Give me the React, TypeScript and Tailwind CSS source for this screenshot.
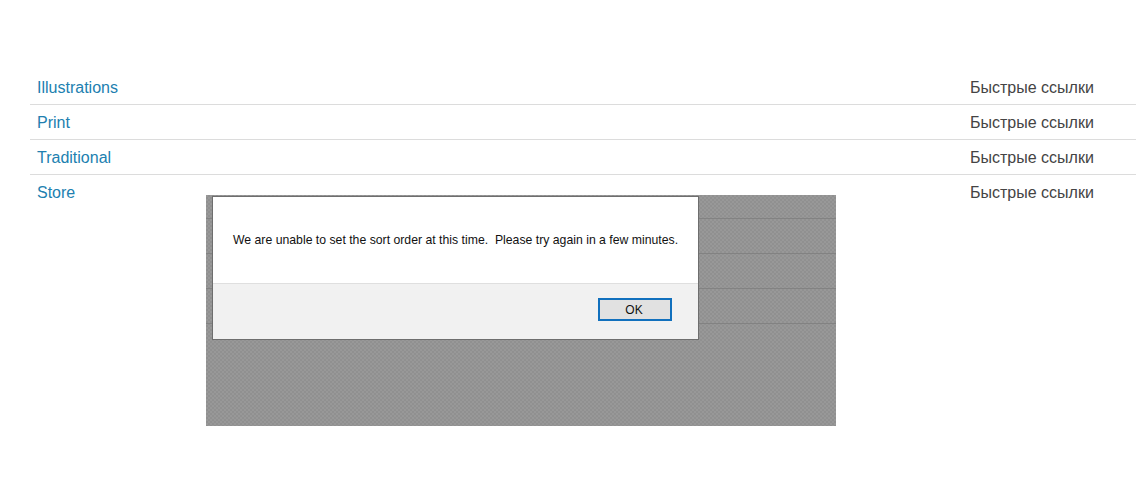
import React from "react";

const rows = ["Illustrations", "Print", "Traditional", "Store"];

const App: React.FC = () => {
  return (
    <div className="relative h-[494px] w-[1136px] overflow-hidden bg-white font-['Liberation_Sans',Arial,sans-serif]">
      {/* LIST */}
      <div className="pl-[30px] pt-[70px]">
        {rows.map((name, index) => (
          <div
            key={name}
            className={`flex h-[35px] items-center justify-between border-b pl-[7px] pr-[42px] pt-[2px] text-[16px] ${
              index < rows.length - 1 ? "border-[#dcdcdc]" : "border-transparent"
            }`}
          >
            <a className="text-[#217fb0]">{name}</a>
            <span className="w-[124px] whitespace-nowrap text-[#444444]">Быстрые ссылки</span>
          </div>
        ))}
      </div>

      {/* GREYED OVERLAY WITH DIALOG */}
      <div className="absolute left-[206px] top-[195px] h-[231px] w-[630px] bg-[repeating-conic-gradient(#909090_0_25%,#989898_0_50%)] bg-[length:4px_4px]">
        <div className="absolute inset-x-0 top-[23px] flex flex-col">
          {[0, 1, 2, 3].map((line) => (
            <div key={line} className="h-[35px] border-t border-[#828282]" />
          ))}
        </div>

        <div className="relative ml-[6px] mt-[1px] flex h-[144px] w-[487px] flex-col border border-[#6e6e6e] bg-white">
          <div className="flex h-[87px] items-center border-b border-[#dfdfdf] pl-[20px] text-[12.25px] whitespace-pre text-[#111111]">
            We are unable to set the sort order at this time.  Please try again in a few minutes.
          </div>
          <div className="flex flex-1 items-center justify-end bg-[#f1f1f1] pr-[26px] pb-[4px]">
            <button className="h-[23px] w-[74px] border-2 border-[#1170bd] bg-[#e1e1e1] pr-[2px] text-[12px] text-[#111111]">
              OK
            </button>
          </div>
        </div>
      </div>
    </div>
  );
};

export default App;
